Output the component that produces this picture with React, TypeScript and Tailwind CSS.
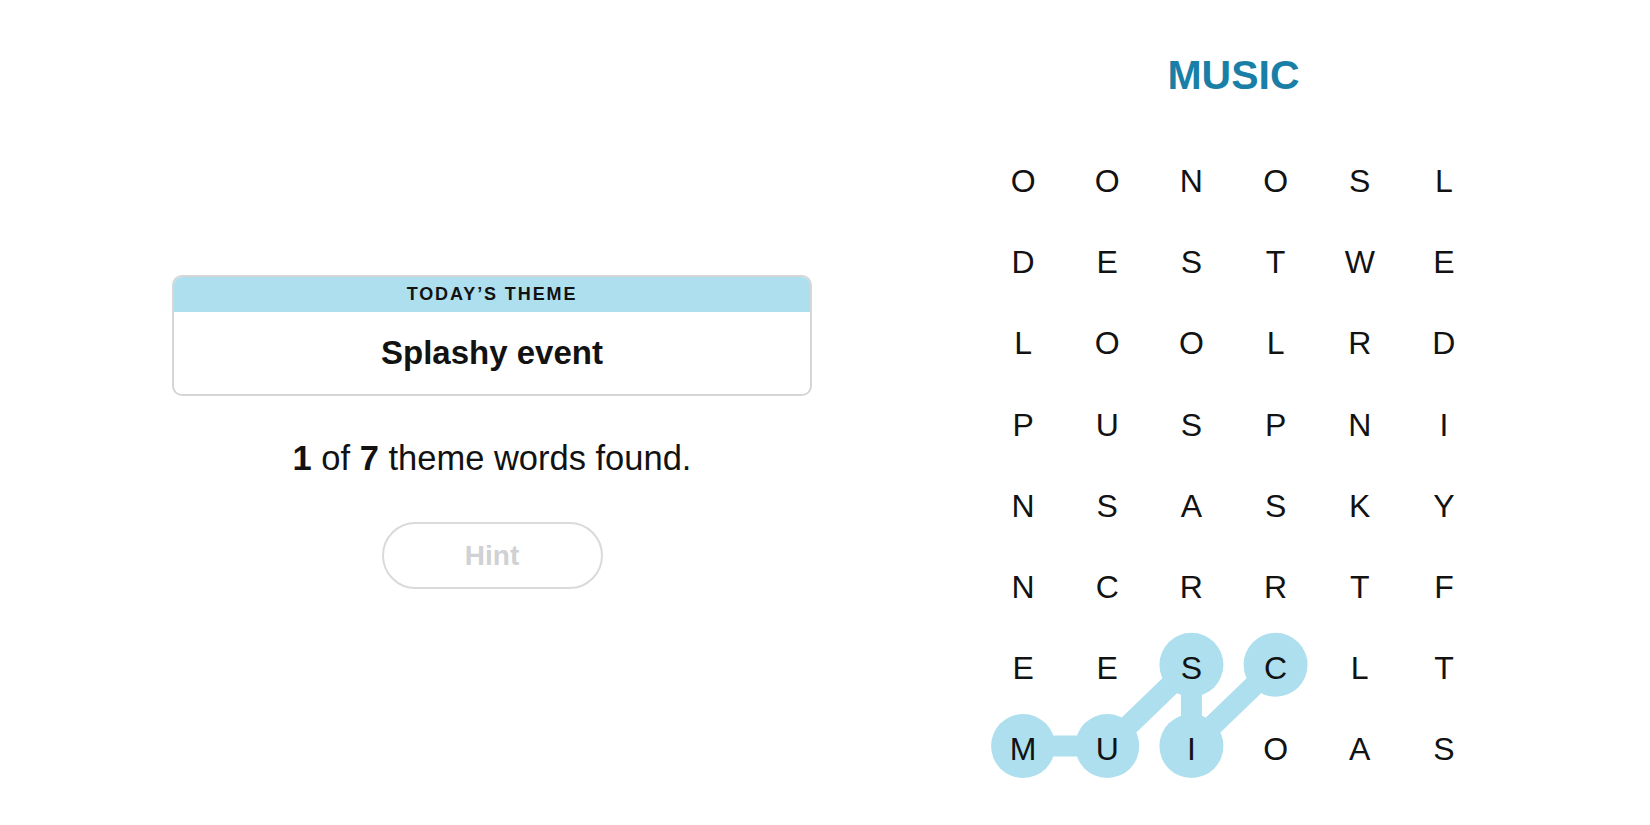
import React from "react";

const rows = [
  "OONOSL",
  "DESTWE",
  "LOOLRD",
  "PUSPNI",
  "NSASKY",
  "NCRRTF",
  "EESCLT",
  "MUIOAS",
];

const CW = 505 / 6;
const RH = 81.2;
const cx = (c: number) => CW / 2 + CW * c;
const cy = (r: number) => RH / 2 + RH * r - 4;

const path: [number, number][] = [
  [7, 0],
  [7, 1],
  [6, 2],
  [7, 2],
  [6, 3],
];

export default function App() {
  return (
    <div
      className="flex h-[825px] w-[1650px] bg-white text-black"
      style={{ fontFamily: '"Liberation Sans", Arial, sans-serif' }}
    >
      <div className="flex w-[981px] flex-col items-center pl-[3px] pt-[275px]">
        <div className="w-[640px] overflow-hidden rounded-[10px] border-2 border-[#d6d6d6]">
          <div className="flex h-[35px] items-center justify-center bg-[#aedfee] text-[18px] font-bold tracking-[1.9px] text-[#121212]">
            TODAY’S THEME
          </div>
          <div className="flex h-[82px] items-center justify-center text-[33px] font-bold text-[#121212]">
            Splashy event
          </div>
        </div>
        <div className="mt-[42px] text-[34.5px] leading-[40px] text-[#121212]">
          <span className="font-bold">1</span> of <span className="font-bold">7</span> theme words found.
        </div>
        <div className="mt-[44px] flex h-[67px] w-[221px] items-center justify-center rounded-full border-2 border-[#dadada] text-[28px] font-bold text-[#cfd1d4]">
          Hint
        </div>
      </div>
      <div className="flex w-[505px] flex-col items-center pt-[55px]">
        <div className="text-[41px] font-bold leading-[41px] text-[#1a7fa6]">MUSIC</div>
        <div className="relative mt-[44.5px] w-[505px]">
          <svg className="absolute inset-0" width={505} height={650}>
            {path.slice(1).map((p, i) => {
              const a = path[i];
              return (
                <line
                  key={i}
                  x1={cx(a[1])}
                  y1={cy(a[0])}
                  x2={cx(p[1])}
                  y2={cy(p[0])}
                  stroke="#aedfee"
                  strokeWidth={21}
                />
              );
            })}
            {path.map((p, i) => (
              <circle key={i} cx={cx(p[1])} cy={cy(p[0])} r={32} fill="#aedfee" />
            ))}
          </svg>
          <div className="relative grid grid-cols-6">
            {rows.map((row, r) =>
              row.split("").map((ch, c) => (
                <div
                  key={`${r}-${c}`}
                  className="flex h-[81.2px] items-center justify-center text-[32px] text-[#121212]"
                >
                  {ch}
                </div>
              ))
            )}
          </div>
        </div>
      </div>
    </div>
  );
}
